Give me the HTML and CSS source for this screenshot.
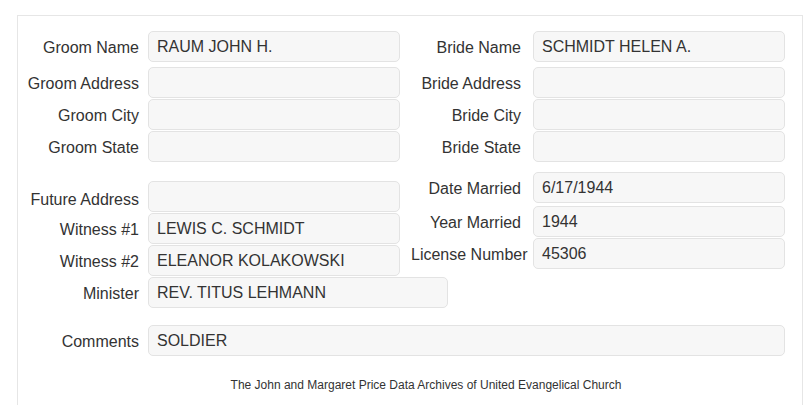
FILE: index.html
```html
<!DOCTYPE html>
<html>
<head>
<meta charset="utf-8">
<link rel="stylesheet" href="styles.css">
</head>
<body>
<div class="panel">
  <div class="pair">
    <div class="col col-left">
      <div class="row first"><label class="lbl">Groom Name</label><div class="field">RAUM JOHN H.</div></div>
      <div class="row"><label class="lbl">Groom Address</label><div class="field"></div></div>
      <div class="row"><label class="lbl">Groom City</label><div class="field"></div></div>
      <div class="row"><label class="lbl">Groom State</label><div class="field"></div></div>
    </div>
    <div class="col col-right">
      <div class="row first"><label class="lbl">Bride Name</label><div class="field">SCHMIDT HELEN A.</div></div>
      <div class="row"><label class="lbl">Bride Address</label><div class="field"></div></div>
      <div class="row"><label class="lbl">Bride City</label><div class="field"></div></div>
      <div class="row"><label class="lbl">Bride State</label><div class="field"></div></div>
    </div>
  </div>
  <div class="pair second">
    <div class="col col-left lower-left">
      <div class="row"><label class="lbl lbl-low">Future Address</label><div class="field"></div></div>
      <div class="row"><label class="lbl">Witness #1</label><div class="field">LEWIS C. SCHMIDT</div></div>
      <div class="row"><label class="lbl">Witness #2</label><div class="field">ELEANOR KOLAKOWSKI</div></div>
      <div class="row"><label class="lbl">Minister</label><div class="field field-wide">REV. TITUS LEHMANN</div></div>
    </div>
    <div class="col col-right lower-right">
      <div class="row gap3"><label class="lbl">Date Married</label><div class="field">6/17/1944</div></div>
      <div class="row"><label class="lbl">Year Married</label><div class="field">1944</div></div>
      <div class="row"><label class="lbl">License Number</label><div class="field">45306</div></div>
    </div>
  </div>
  <div class="row comments"><label class="lbl">Comments</label><div class="field field-full">SOLDIER</div></div>
  <p class="footer">The John and Margaret Price Data Archives of United Evangelical Church</p>
</div>
</body>
</html>
```

FILE: styles.css
```css
html, body {
  margin: 0;
  padding: 0;
  background: #ffffff;
}
body {
  font-family: "Liberation Sans", Arial, sans-serif;
  font-size: 16px;
  color: #333333;
}
.panel {
  margin: 15px 2px 0 17px;
  border: 1px solid #e6e6e6;
  border-bottom: none;
  padding: 15px 0 20px 0;
  height: 400px;
  box-sizing: border-box;
}
.pair {
  display: flex;
}
.second {
  margin-top: 10px;
}
.col {
  display: flex;
  flex-direction: column;
  gap: 1px;
  flex-shrink: 0;
}
.col-left {
  width: 382px;
}
.col-right {
  padding-left: 11px;
}
.lower-left {
  padding-top: 9px;
}
.row {
  display: flex;
  align-items: flex-start;
}
.row.first {
  margin-bottom: 4px;
}
.row.gap3 {
  margin-bottom: 2px;
}
.lbl {
  display: block;
  flex-shrink: 0;
  width: 121px;
  margin-right: 9px;
  text-align: right;
  line-height: 20px;
  padding-top: 7px;
  white-space: nowrap;
}
.col-right .lbl {
  width: 110px;
  margin-right: 12px;
}
.lbl-low {
  padding-top: 9px;
}
.field {
  flex-shrink: 0;
  width: 252px;
  height: 31px;
  box-sizing: border-box;
  background: #f7f7f7;
  border: 1px solid #e3e3e3;
  border-radius: 5px;
  padding: 0 8px;
  line-height: 20px;
  display: flex;
  align-items: center;
  color: #333333;
}
.field-wide {
  width: 300px;
}
.comments {
  margin-top: 17px;
}
.field-full {
  width: 637px;
}
.footer {
  margin: 22px 0 0 0;
  padding-left: 32px;
  text-align: center;
  font-size: 12px;
  line-height: 14px;
  color: #333333;
}
```
